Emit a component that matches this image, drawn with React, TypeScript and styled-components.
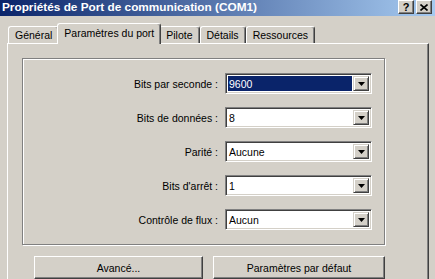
import React from "react";
import styled, { createGlobalStyle } from "styled-components";

const Global = createGlobalStyle`
  html, body { margin: 0; padding: 0; background: #d4d0c8; }
  body { font-family: "Liberation Sans", Arial, sans-serif; }
`;

const Window = styled.div`
  width: 435px;
  height: 279px;
  overflow: hidden;
  background: #d4d0c8;
  display: flex;
  flex-direction: column;
  font-family: "Liberation Sans", Arial, sans-serif;
  font-size: 10.5px;
  color: #000;
`;

const TitleBar = styled.div`
  height: 16px;
  flex: 0 0 16px;
  background: linear-gradient(to right, #0a246a 0%, #a6caf0 100%);
  display: flex;
  align-items: flex-start;
  padding: 0 3px 0 2px;
`;

const TitleText = styled.div`
  flex: 1;
  color: #fff;
  font-weight: bold;
  font-size: 11.8px;
  line-height: 14px;
  white-space: nowrap;
`;

const TitleButtons = styled.div`
  display: flex;
  gap: 2px;
`;

const TitleButton = styled.div`
  width: 16px;
  height: 14px;
  box-sizing: border-box;
  background: #d4d0c8;
  border: 1px solid;
  border-color: #fff #404040 #404040 #fff;
  box-shadow: inset -1px -1px #808080;
  display: flex;
  align-items: center;
  justify-content: center;
  font-weight: bold;
  font-size: 11px;
  line-height: 1;
`;

const Body = styled.div`
  flex: 1;
  display: flex;
  flex-direction: column;
  padding: 7px 6px 0 7px;
`;

const TabStrip = styled.div`
  display: flex;
  align-items: flex-end;
  height: 20px;
  padding-left: 1px;
`;

const Tab = styled.div<{ $active?: boolean }>`
  position: relative;
  z-index: ${(p) => (p.$active ? 2 : 1)};
  box-sizing: border-box;
  height: ${(p) => (p.$active ? 21 : 17)}px;
  margin: ${(p) => (p.$active ? "0 -2px -1px -2px" : "0")};
  padding: ${(p) => (p.$active ? "0 6px 2px 6px" : "0 6px 1px 6px")};
  background: #d4d0c8;
  border-top: 1px solid #fff;
  border-left: 1px solid #fff;
  border-right: 1px solid #404040;
  box-shadow: inset -1px 0 #808080;
  border-radius: 3px 3px 0 0;
  display: flex;
  align-items: center;
  white-space: nowrap;
`;

const Panel = styled.div`
  flex: 1;
  box-sizing: border-box;
  border-top: 1px solid #fff;
  border-left: 1px solid #fff;
  border-right: 1px solid #404040;
  box-shadow: inset -1px 0 #808080;
  padding: 14px 0 0 14px;
  display: flex;
  flex-direction: column;
`;

const Group = styled.div`
  width: 363px;
  height: 187px;
  box-sizing: border-box;
  border: 1px solid #808080;
  box-shadow: inset 1px 1px #fff, 1px 1px #fff;
  padding: 14px 12px 0 0;
  display: flex;
  flex-direction: column;
  gap: 13px;
`;

const Row = styled.div`
  display: flex;
  justify-content: flex-end;
  align-items: center;
  gap: 7px;
  height: 21px;
`;

const Label = styled.span`
  white-space: nowrap;
`;

const Combo = styled.div`
  width: 147px;
  height: 21px;
  box-sizing: border-box;
  background: #fff;
  border: 1px solid;
  border-color: #808080 #fff #fff #808080;
  box-shadow: inset 1px 1px #404040, inset -1px -1px #d4d0c8;
  padding: 2px;
  display: flex;
`;

const Field = styled.div<{ $selected?: boolean }>`
  flex: 1;
  display: flex;
  align-items: center;
  padding-left: 1px;
  margin-right: 1px;
  background: ${(p) => (p.$selected ? "#0a246a" : "transparent")};
  color: ${(p) => (p.$selected ? "#fff" : "#000")};
  white-space: nowrap;
`;

const DropButton = styled.div`
  width: 16px;
  box-sizing: border-box;
  background: #d4d0c8;
  border: 1px solid;
  border-color: #d4d0c8 #404040 #404040 #d4d0c8;
  box-shadow: inset 1px 1px #fff, inset -1px -1px #808080;
  display: flex;
  align-items: center;
  justify-content: center;
`;

const ButtonRow = styled.div`
  display: flex;
  gap: 10px;
  padding: 11px 0 0 12px;
`;

const PushButton = styled.div<{ $w: number }>`
  width: ${(p) => p.$w}px;
  height: 23px;
  box-sizing: border-box;
  background: #d4d0c8;
  border: 1px solid;
  border-color: #fff #404040 #404040 #fff;
  box-shadow: inset -1px -1px #808080;
  display: flex;
  align-items: center;
  justify-content: center;
  white-space: nowrap;
`;

const Arrow = () => (
  <svg width="7" height="4" viewBox="0 0 7 4">
    <path d="M0 0H7L3.5 4Z" fill="#000" />
  </svg>
);

const CloseGlyph = () => (
  <svg width="8" height="7" viewBox="0 0 8 7">
    <path d="M0.5 0.5L7.5 6.5M7.5 0.5L0.5 6.5" stroke="#000" strokeWidth="1.6" />
  </svg>
);

const rows: { label: string; value: string; selected?: boolean }[] = [
  { label: "Bits par seconde :", value: "9600", selected: true },
  { label: "Bits de données :", value: "8" },
  { label: "Parité :", value: "Aucune" },
  { label: "Bits d'arrêt :", value: "1" },
  { label: "Contrôle de flux :", value: "Aucun" },
];

const tabs = ["Général", "Paramètres du port", "Pilote", "Détails", "Ressources"];

export default function App() {
  return (
    <>
      <Global />
      <Window>
        <TitleBar>
          <TitleText>Propriétés de Port de communication (COM1)</TitleText>
          <TitleButtons>
            <TitleButton>?</TitleButton>
            <TitleButton>
              <CloseGlyph />
            </TitleButton>
          </TitleButtons>
        </TitleBar>
        <Body>
          <TabStrip>
            {tabs.map((t, i) => (
              <Tab key={t} $active={i === 1}>
                {t}
              </Tab>
            ))}
          </TabStrip>
          <Panel>
            <Group>
              {rows.map((r) => (
                <Row key={r.label}>
                  <Label>{r.label}</Label>
                  <Combo>
                    <Field $selected={r.selected}>{r.value}</Field>
                    <DropButton>
                      <Arrow />
                    </DropButton>
                  </Combo>
                </Row>
              ))}
            </Group>
            <ButtonRow>
              <PushButton $w={169}>Avancé...</PushButton>
              <PushButton $w={172}>Paramètres par défaut</PushButton>
            </ButtonRow>
          </Panel>
        </Body>
      </Window>
    </>
  );
}
